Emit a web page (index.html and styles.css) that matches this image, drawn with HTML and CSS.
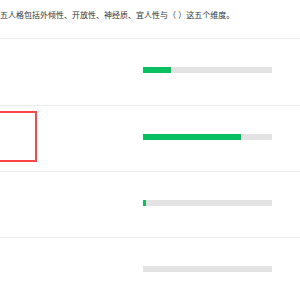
FILE: index.html
```html
<!DOCTYPE html>
<html lang="zh-CN">
<head>
    <meta charset="UTF-8">
    <title>大五人格</title>
    <link rel="stylesheet" href="styles.css">
</head>
<body>
    <div class="question">五人格包括外倾性、开放性、神经质、宜人性与（ ）这五个维度。</div>

    <div class="option">
        <div class="option-label"></div>
        <div class="bar"><div class="bar-fill" style="width: 22%"></div></div>
    </div>

    <div class="option">
        <div class="option-label"><div class="selected"></div></div>
        <div class="bar"><div class="bar-fill" style="width: 76%"></div></div>
    </div>

    <div class="option">
        <div class="option-label"></div>
        <div class="bar"><div class="bar-fill" style="width: 2%"></div></div>
    </div>

    <div class="option">
        <div class="option-label"></div>
        <div class="bar"><div class="bar-fill" style="width: 0%"></div></div>
    </div>
</body>
</html>
```

FILE: styles.css
```css
body {
    margin: 0;
    background: #fff;
    font-family: "Liberation Sans", "Noto Sans CJK SC", sans-serif;
    color: #333;
}
.question {
    height: 27px;
    padding-top: 11px;
    font-size: 8px;
    line-height: 10px;
    border-bottom: 1px solid #ebebeb;
    white-space: nowrap;
}
.option {
    display: flex;
    height: 65px;
    border-bottom: 1px solid #ebebeb;
}
.question + .option {
    height: 66px;
}
.option-label {
    width: 143px;
    padding-top: 5px;
}
.selected {
    width: 35px;
    height: 47px;
    border: 2px solid #f44;
    border-left: none;
}
.bar {
    width: 129px;
    height: 6px;
    margin-top: 28px;
    background: #e3e3e3;
}
.bar-fill {
    height: 100%;
    background: #07c160;
}
```
